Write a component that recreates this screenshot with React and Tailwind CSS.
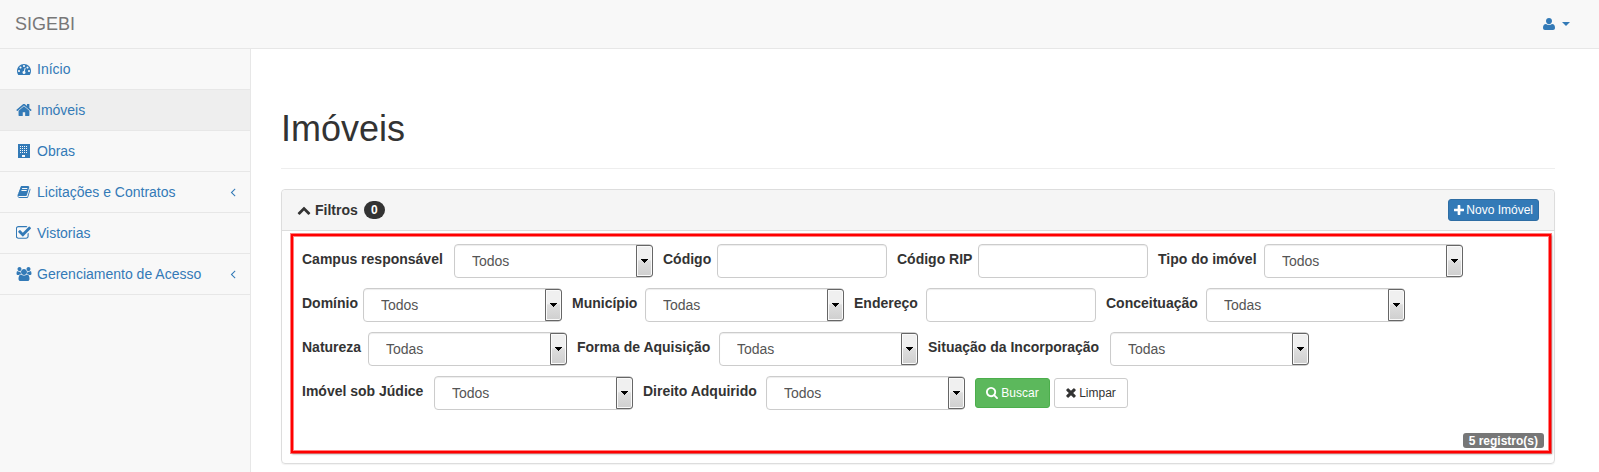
import React, { useState } from 'react';

const ICONS = {
  dashboard: {
    d: 'M384 1152q0-53-37.5-90.5t-90.5-37.5-90.5 37.5-37.5 90.5 37.5 90.5 90.5 37.5 90.5-37.5 37.5-90.5zm192-448q0-53-37.5-90.5t-90.5-37.5-90.5 37.5-37.5 90.5 37.5 90.5 90.5 37.5 90.5-37.5 37.5-90.5zm428 481l101-382q6-26-7.5-48.5t-38.5-29.5-48 6.5-30 39.5l-101 382q-60 5-107 43.5t-63 98.5q-20 77 20 146t117 89 146-20 89-117q16-60-6-117t-72-91zm660-33q0-53-37.5-90.5t-90.5-37.5-90.5 37.5-37.5 90.5 37.5 90.5 90.5 37.5 90.5-37.5 37.5-90.5zm-640-640q0-53-37.5-90.5t-90.5-37.5-90.5 37.5-37.5 90.5 37.5 90.5 90.5 37.5 90.5-37.5 37.5-90.5zm448 192q0-53-37.5-90.5t-90.5-37.5-90.5 37.5-37.5 90.5 37.5 90.5 90.5 37.5 90.5-37.5 37.5-90.5zm320 448q0 261-141 483-19 29-54 29h-1402q-35 0-54-29-141-221-141-483 0-182 71-348t191-286 286-191 348-71 348 71 286 191 191 286 71 348z',
  },
  home: {
    box: '50 160 1700 1488',
    d: 'M1472 992v480q0 26-19 45t-45 19h-384v-384h-256v384h-384q-26 0-45-19t-19-45v-480q0-1 .5-3t.5-3l575-474 575 474q1 2 1 6zm223-69l-62 74q-8 9-21 11h-3q-13 0-21-7l-692-577-692 577q-12 8-24 7-13-2-21-11l-62-74q-8-10-7-23.5t11-21.5l719-599q32-26 76-26t76 26l244 204v-195q0-14 9-23t23-9h192q14 0 23 9t9 23v408l219 182q10 8 11 21.5t-7 23.5z',
  },
  building: {
    box: '0 0 14 14',
    d: 'M1 0h12v14H1zM3 2v1h1V2zM5 2v1h1V2zM7 2v1h1V2zM9 2v1h1V2zM3 4v1h1V4zM5 4v1h1V4zM7 4v1h1V4zM9 4v1h1V4zM3 6v1h1V6zM5 6v1h1V6zM7 6v1h1V6zM9 6v1h1V6zM3 8v1h1V8zM5 8v1h1V8zM7 8v1h1V8zM9 8v1h1V8zM5 11v2h3v-2z',
  },
  book: {
    d: 'M1703 478q40 57 18 129l-275 906q-19 64-76.5 107.5t-122.5 43.5h-923q-77 0-148.5-53.5t-99.5-131.5q-24-67-2-127 0-4 3-27t4-37q1-8-3-21.5t-3-19.5q2-11 8-21t16.5-23.5 16.5-23.5q23-38 45-91.5t30-91.5q3-10 .5-30t-.5-28q3-11 17-28t17-23q21-36 42-92t25-90q1-9-2.500-32t.5-28q4-13 22-30.5t22-22.5q19-26 42.5-84.5t27.500-96.5q1-8-3-25.5t-2-26.5q2-8 9-18t18-23 17-21q8-12 16.500-30.5t15-35 16-36 19.500-32 26.500-23.5 36-11.500 47.500 5.500l-1 3q38-9 51-9h761q74 0 114 56t18 130l-274 906q-36 119-71.500 153.500t-128.500 34.500h-869q-27 0-38 15-11 16-1 43 24 70 144 70h923q29 0 56-15.500t35-41.500l300-987q7-22 5-57 38 15 59 43zm-1064 2q-4 13 2 22.500t20 9.500h608q13 0 25.500-9.500t16.500-22.500l21-64q4-13-2-22.500t-20-9.500h-608q-13 0-25.500 9.500t-16.500 22.500zm-83 256q-4 13 2 22.500t20 9.500h608q13 0 25.500-9.500t16.500-22.500l21-64q4-13-2-22.500t-20-9.500h-608q-13 0-25.500 9.500t-16.500 22.500z',
  },
  check: {
    box: '160 128 1600 1536',
    d: 'M1472 930v318q0 119-84.5 203.5t-203.5 84.5h-832q-119 0-203.5-84.5t-84.5-203.5v-832q0-119 84.5-203.5t203.5-84.5h832q63 0 117 25 15 7 18 23 3 17-9 29l-49 49q-10 10-23 10-3 0-9-2-23-6-45-6h-832q-66 0-113 47t-47 113v832q0 66 47 113t113 47h832q66 0 113-47t47-113v-254q0-13 9-22l64-64q10-10 23-10 6 0 12 3 20 8 20 29zm231-489l-814 814q-24 24-57 24t-57-24l-430-430q-24-24-24-57t24-57l110-110q24-24 57-24t57 24l263 263 647-647q24-24 57-24t57 24l110 110q24 24 24 57t-24 57z',
  },
  users: {
    box: '0 0 1920 1792',
    d: 'M593 896q-162 5-265 128h-134q-82 0-138-40.5t-56-118.5q0-353 124-353 6 0 43.5 21t97.5 42.5 119 21.5q67 0 133-23-5 37-5 66 0 139 81 256zm1071 637q0 120-73 189.5t-194 69.5h-874q-121 0-194-69.5t-73-189.5q0-53 3.5-103.5t14-109 26.5-108.5 43-97.5 62-81 85.5-53.5 111.5-20q10 0 43 21.5t73 48 107 48 135 21.5 135-21.5 107-48 73-48 43-21.5q61 0 111.5 20t85.5 53.5 62 81 43 97.5 26.5 108.5 14 109 3.5 103.5zm-1024-1277q0 106-75 181t-181 75-181-75-75-181 75-181 181-75 181 75 75 181zm704 384q0 159-112.5 271.5t-271.5 112.5-271.5-112.5-112.5-271.5 112.5-271.5 271.5-112.5 271.5 112.5 112.5 271.5zm576 225q0 78-56 118.5t-138 40.5h-134q-103-123-265-128 81-117 81-256 0-29-5-66 66 23 133 23 59 0 119-21.5t97.5-42.5 43.5-21q124 0 124 353zm-128-609q0 106-75 181t-181 75-181-75-75-181 75-181 181-75 181 75 75 181z',
  },
  user: {
    box: '0 0 12 12',
    d: 'M6 0C4.200 0 3 1.300 3 3.100S4.300 6.300 6 6.300 9 4.900 9 3.100 7.800 0 6 0zM3 6C1 6.100 0 7.500 0 9.800 0 11.200 .8 12 2 12h8c1.200 0 2-.8 2-2.200C12 7.500 11 6.100 9 6 8.200 6.700 7.200 7.100 6 7.100S3.800 6.700 3 6z',
  },
  angleLeft: {
    d: 'M1203 544q0 13-10 23l-393 393 393 393q10 10 10 23t-10 23l-50 50q-10 10-23 10t-23-10l-466-466q-10-10-10-23t10-23l466-466q10-10 23-10t23 10l50 50q10 10 10 23z',
  },
  chevronUp: {
    d: 'M1683 1331l-166 165q-19 19-45 19t-45-19l-531-531-531 531q-19 19-45 19t-45-19l-166-165q-19-19-19-45.5t19-45.5l742-741q19-19 45-19t45 19l742 741q19 19 19 45.5t-19 45.5z',
  },
  plus: {
    box: '192 128 1408 1408',
    d: 'M1600 736v192q0 40-28 68t-68 28h-416v416q0 40-28 68t-68 28h-192q-40 0-68-28t-28-68v-416h-416q-40 0-68-28t-28-68v-192q0-40 28-68t68-28h416v-416q0-40 28-68t68-28h192q40 0 68 28t28 68v416h416q40 0 68 28t28 68z',
  },
  search: {
    box: '64 128 1664 1664',
    d: 'M1216 832q0-185-131.5-316.5t-316.5-131.5-316.5 131.5-131.5 316.5 131.5 316.5 316.5 131.5 316.5-131.5 131.5-316.5zm512 832q0 52-38 90t-90 38q-54 0-90-38l-343-342q-179 124-399 124-143 0-273.5-55.5t-225-150-150-225-55.5-273.5 55.5-273.5 150-225 225-150 273.5-55.5 273.5 55.5 225 150 150 225 55.5 273.5q0 220-124 399l343 343q37 37 37 90z',
  },
  times: {
    box: '270 334 1252 1252',
    d: 'M1490 1322q0 40-28 68l-136 136q-28 28-68 28t-68-28l-294-294-294 294q-28 28-68 28t-68-28l-136-136q-28-28-28-68t28-68l294-294-294-294q-28-28-28-68t28-68l136-136q28-28 68-28t68 28l294 294 294-294q28-28 68-28t68 28l136 136q28 28 28 68t-28 68l-294 294 294 294q28 28 28 68z',
  },
};

function Icon({ name, className }) {
  const { d, box = '0 0 1792 1792' } = ICONS[name];
  return (
    <svg viewBox={box} fill="currentColor" fillRule="evenodd" aria-hidden="true" className={`shrink-0 ${className}`}>
      <path d={d} />
    </svg>
  );
}

const MENU = [
  { label: 'Início', icon: 'dashboard' },
  { label: 'Imóveis', icon: 'home', active: true },
  { label: 'Obras', icon: 'building' },
  { label: 'Licitações e Contratos', icon: 'book', nested: true },
  { label: 'Vistorias', icon: 'check' },
  { label: 'Gerenciamento de Acesso', icon: 'users', nested: true },
];

const FIELDS = [
  { id: 'campus', label: 'Campus responsável', option: 'Todos', width: 'min-w-[148px]' },
  { id: 'codigo', label: 'Código', width: 'min-w-[50px]' },
  { id: 'rip', label: 'Código RIP', width: 'min-w-[77px]' },
  { id: 'tipo', label: 'Tipo do imóvel', option: 'Todos', width: 'min-w-[102px]' },
  { id: 'dominio', label: 'Domínio', option: 'Todos', width: 'min-w-[57px]' },
  { id: 'municipio', label: 'Município', option: 'Todas', width: 'min-w-[69px]' },
  { id: 'endereco', label: 'Endereço', width: 'min-w-[68px]' },
  { id: 'conceituacao', label: 'Conceituação', option: 'Todas', width: 'min-w-[96px]' },
  { id: 'natureza', label: 'Natureza', option: 'Todas', width: 'min-w-[62px]' },
  { id: 'aquisicao', label: 'Forma de Aquisição', option: 'Todas', width: 'min-w-[138px]' },
  { id: 'incorporacao', label: 'Situação da Incorporação', option: 'Todas', width: 'min-w-[178px]' },
  { id: 'judice', label: 'Imóvel sob Júdice', option: 'Todos', width: 'min-w-[128px]' },
  { id: 'direito', label: 'Direito Adquirido', option: 'Todos', width: 'min-w-[119px]' },
];

function SelectBox({ id, option }) {
  return (
    <div className="relative w-[199px]">
      <select
        id={id}
        className="h-[34px] w-full appearance-none rounded border border-[#ccc] bg-white pl-[17px] pr-5 text-sm text-[#555] shadow-[inset_0_1px_1px_rgba(0,0,0,0.075)]"
      >
        <option>{option}</option>
      </select>
      <span className="pointer-events-none absolute inset-y-px right-0 flex w-[17px] items-center justify-center rounded-r-[3px] border border-[#666] bg-linear-to-b from-[#f0f0f0] from-45% via-[#dedede] via-50% to-[#cfcfcf] shadow-[inset_0_0_0_1px_#fafafa]">
        <svg viewBox="0 0 7 4" className="h-1 w-[7px]" shapeRendering="crispEdges" aria-hidden="true">
          <path d="M0 0h7v1H6v1H5v1H4v1H3V3H2V2H1V1H0z" fill="#000" />
        </svg>
      </span>
    </div>
  );
}

function Field({ id, label, option, width }) {
  return (
    <div className="flex items-center gap-1">
      <label htmlFor={id} className={`mb-1 whitespace-nowrap text-sm font-bold ${width}`}>
        {label}
      </label>
      {option ? (
        <SelectBox id={id} option={option} />
      ) : (
        <input
          id={id}
          type="text"
          className="h-[34px] w-[170px] rounded border border-[#ccc] bg-white px-3 text-sm text-[#555] shadow-[inset_0_1px_1px_rgba(0,0,0,0.075)]"
        />
      )}
    </div>
  );
}

export default function App() {
  const [open, setOpen] = useState(true);
  return (
    <div className="flex min-h-screen flex-col bg-white font-['Liberation_Sans',Arial,sans-serif] text-sm text-[#333]">
      <header className="flex h-[49px] items-center justify-between border-b border-[#e7e7e7] bg-[#f8f8f8] pl-[15px] pr-[29px] pb-px">
        <a href="#inicio" className="text-lg text-[#777]">
          SIGEBI
        </a>
        <button type="button" aria-label="Conta do usuário" className="flex items-center gap-[7px] text-[#337ab7]">
          <Icon name="user" className="size-3" />
          <svg viewBox="0 0 8 4" className="h-1 w-2" fill="currentColor" aria-hidden="true">
            <path d="M0 0h8L4 4z" />
          </svg>
        </button>
      </header>

      <div className="flex flex-1">
        <nav className="w-[251px] shrink-0 border-r border-[#e7e7e7] bg-[#f8f8f8]">
          <ul>
            {MENU.map((item) => (
              <li key={item.label} className="border-b border-[#e7e7e7]">
                <a
                  href="#menu"
                  className={`flex h-10 items-center pl-4 pr-[10px] text-[#337ab7] ${item.active ? 'bg-[#eee]' : ''}`}
                >
                  <span className="flex w-[21px] items-center">
                    <Icon name={item.icon} className="h-[14px] w-4" />
                  </span>
                  <span className="flex-1">{item.label}</span>
                  {item.nested && <Icon name="angleLeft" className="size-[14px]" />}
                </a>
              </li>
            ))}
          </ul>
        </nav>

        <main className="min-w-0 flex-1 pl-[30px] pr-11">
          <h1 className="mt-[60px] border-b border-[#eee] pb-[19px] text-4xl leading-10">Imóveis</h1>

          <section className="relative mt-5 rounded border border-[#ddd] shadow-[0_1px_1px_rgba(0,0,0,0.05)]">
            <div className="flex h-[41px] items-center justify-between rounded-t border-b border-[#ddd] bg-[#f5f5f5] px-[15px]">
              <button type="button" aria-expanded={open} onClick={() => setOpen(!open)} className="flex items-center gap-1 font-bold">
                <Icon name="chevronUp" className="size-[14px]" />
                <span className="min-w-[45px] text-left">Filtros</span>
                <span className="flex h-[18px] items-center rounded-[10px] bg-[#333] px-[7px] text-xs text-white">0</span>
              </button>
              <button
                type="button"
                className="flex h-[22px] items-center gap-0.5 rounded-[3px] border border-[#2e6da4] bg-[#337ab7] px-[5px] text-xs text-white"
              >
                <Icon name="plus" className="size-[10px]" />
                Novo Imóvel
              </button>
            </div>

            {open && (
              <div className="pt-[13px] pr-[10px] pb-[15px] pl-5">
                <form className="flex flex-wrap items-center gap-[10px]" onSubmit={(e) => e.preventDefault()}>
                  {FIELDS.map((field) => (
                    <Field key={field.id} {...field} />
                  ))}
                  <div className="flex gap-1">
                    <button
                      type="submit"
                      className="flex h-[30px] min-w-[75px] items-center justify-center gap-[3px] rounded-[3px] border border-[#4cae4c] bg-[#5cb85c] px-[9px] text-xs text-white"
                    >
                      <Icon name="search" className="size-3" />
                      Buscar
                    </button>
                    <button
                      type="reset"
                      className="flex h-[30px] min-w-[74px] items-center justify-center gap-[3px] rounded-[3px] border border-[#ccc] bg-white px-[9px] text-xs text-[#333]"
                    >
                      <Icon name="times" className="size-[10px]" />
                      Limpar
                    </button>
                  </div>
                </form>
                <div className="mt-[23px] flex justify-end">
                  <span className="flex h-[15px] items-center rounded-[3px] bg-[#777] px-[6px] text-xs leading-3 font-bold text-white">
                    5 registro(s)
                  </span>
                </div>
              </div>
            )}

            <div className="pointer-events-none absolute top-[44px] right-[3px] bottom-[10px] left-[9px] border-2 border-[#f00] shadow-[0_0_0_1px_rgba(255,0,0,0.5),inset_0_0_0_1px_rgba(255,0,0,0.5),1px_1px_2px_rgba(0,0,0,0.4)]" />
          </section>
        </main>
      </div>
    </div>
  );
}
